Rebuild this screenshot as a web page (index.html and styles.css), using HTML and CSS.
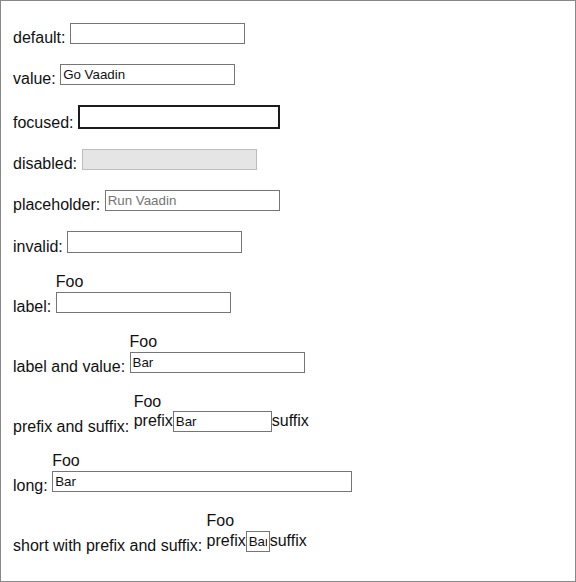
FILE: index.html
```html
<!DOCTYPE html>
<html>
<head>
<meta charset="utf-8">
<link rel="stylesheet" href="styles.css">
</head>
<body>
<div class="row">default: <span class="field"><span class="input-row"><input class="tf" type="text"></span></span></div>
<div class="row">value: <span class="field"><span class="input-row"><input class="tf" type="text" value="Go Vaadin"></span></span></div>
<div class="row">focused: <span class="field"><span class="input-row"><input class="tf tf-focused" type="text"></span></span></div>
<div class="row">disabled: <span class="field"><span class="input-row"><input class="tf" type="text" disabled></span></span></div>
<div class="row">placeholder: <span class="field"><span class="input-row"><input class="tf" type="text" placeholder="Run Vaadin"></span></span></div>
<div class="row">invalid: <span class="field"><span class="input-row"><input class="tf tf-invalid" type="text"></span></span></div>
<div class="row">label: <span class="field"><span class="field-label">Foo</span><span class="input-row"><input class="tf" type="text"></span></span></div>
<div class="row">label and value: <span class="field"><span class="field-label">Foo</span><span class="input-row"><input class="tf" type="text" value="Bar"></span></span></div>
<div class="row">prefix and suffix: <span class="field"><span class="field-label">Foo</span><span class="input-row">prefix<input class="tf tf-mid" type="text" value="Bar">suffix</span></span></div>
<div class="row">long: <span class="field"><span class="field-label">Foo</span><span class="input-row"><input class="tf tf-long" type="text" value="Bar"></span></span></div>
<div class="row">short with prefix and suffix: <span class="field"><span class="field-label">Foo</span><span class="input-row">prefix<input class="tf tf-short" type="text" value="Bar">suffix</span></span></div>
</body>
</html>
```
FILE: styles.css
```css
html, body {
  margin: 0;
  height: 100%;
}
body {
  box-sizing: border-box;
  border: 1px solid #888888;
  padding: 22px 12px;
  font-family: "Liberation Sans", Arial, sans-serif;
  font-size: 16px;
  color: #111111;
  background: #ffffff;
  overflow: hidden;
}
.row {
  margin-bottom: 17px;
  white-space: nowrap;
}
.field {
  display: inline-block;
  overflow: hidden;
  vertical-align: -1px;
}
.field-label {
  display: block;
  line-height: 18.75px;
}
.input-row {
  display: block;
  white-space: nowrap;
}
.tf {
  box-sizing: border-box;
  width: 175px;
  height: 21px;
  margin: 0;
  padding: 1px 2px;
  border: 1px solid #767676;
  border-radius: 0;
  font-family: "Liberation Sans", Arial, sans-serif;
  font-size: 13.333px;
  color: #111111;
  background: #ffffff;
  outline: none;
  vertical-align: baseline;
}
.tf::placeholder {
  color: #757575;
}
.tf:disabled {
  background: #e5e5e5;
  border-color: #bdbdbd;
}
.tf-focused {
  width: 202px;
  height: 24px;
  border: 2px solid #1c1c1c;
}
.tf-invalid {
  height: 22px;
}
.tf-mid {
  width: 99px;
}
.tf-long {
  width: 300px;
}
.tf-short {
  width: 24px;
}
```
